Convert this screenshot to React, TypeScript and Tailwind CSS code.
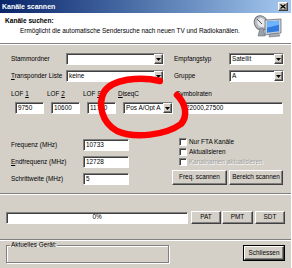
import React from "react";

const inset =
  "bg-white border border-t-[#808080] border-l-[#808080] border-b-white border-r-white shadow-[inset_1px_1px_0_#404040]";
const raised =
  "bg-[#d4d0c8] border border-t-white border-l-white border-b-[#404040] border-r-[#404040] shadow-[inset_-1px_-1px_0_#808080]";

const Arrow = () => (
  <span className={`${raised} flex h-full w-[9px] shrink-0 items-center justify-center`}>
    <svg width="5" height="3" viewBox="0 0 5 3">
      <path d="M0 0h5L2.5 3z" fill="#000" />
    </svg>
  </span>
);

const Combo = ({ value, className }: { value: string; className: string }) => (
  <div className={`${inset} flex h-[12px] items-center ${className}`}>
    <span className="flex-1 overflow-hidden pl-[2px] leading-none">{value}</span>
    <Arrow />
  </div>
);

const Field = ({ value, className }: { value: string; className: string }) => (
  <div className={`${inset} flex h-[12px] items-center overflow-hidden pl-[2px] leading-none ${className}`}>
    {value}
  </div>
);

const Button = ({ label, className }: { label: string; className: string }) => (
  <div className={`${raised} flex items-center justify-center leading-none ${className}`}>{label}</div>
);

const Check = ({ label, disabled }: { label: string; disabled?: boolean }) => (
  <div className="flex h-[8px] items-center gap-[2px]">
    <span className={`${inset} h-[8px] w-[8px] shrink-0 ${disabled ? "bg-[#d4d0c8]" : ""}`} />
    <span className={`leading-none ${disabled ? "text-[#a0a0a0] [text-shadow:1px_1px_0_#fff]" : ""}`}>{label}</span>
  </div>
);

const Separator = () => <div className="h-[2px] border-t border-t-[#808080] border-b border-b-white" />;

const ScanIcon = () => (
  <svg width="30" height="23" viewBox="0 0 30 23">
    <ellipse cx="8" cy="8" rx="6.5" ry="7.5" transform="rotate(-30 8 8)" fill="#b9bcc2" stroke="#6b7078" />
    <ellipse cx="8.5" cy="8" rx="4" ry="5" transform="rotate(-30 8 8)" fill="#e6e8ec" />
    <path d="M4 4l5 5" stroke="#555" strokeWidth="1" />
    <path d="M7 13l-2 8h7l-2-8z" fill="#9aa0a8" stroke="#6b7078" strokeWidth="0.6" />
    <path d="M12 5l16-1v14l-16 2z" fill="#c9ced6" stroke="#6b7078" strokeWidth="0.8" />
    <path d="M14 6.5l12-0.8v10.5l-12 1.5z" fill="#2f7be0" />
    <path d="M14 6.5l12-0.8v4l-12 3z" fill="#6fb4ff" />
    <path d="M17 19l8-1 2 3-11 1z" fill="#a8adb5" stroke="#6b7078" strokeWidth="0.6" />
  </svg>
);

export default function App() {
  return (
    <div className="relative h-[268px] w-[292px] overflow-hidden whitespace-nowrap border-r border-r-white bg-[#d4d0c8] font-['Liberation_Sans',Arial,sans-serif] text-[6.4px] text-black">
      {/* title bar */}
      <div className="flex h-[13px] items-center justify-between bg-gradient-to-r from-[#0a246a] to-[#a6caf0] pl-[2px] pr-[3px]">
        <span className="text-[7px] font-bold leading-none text-white">Kanäle scannen</span>
        <span className={`${raised} flex h-[9px] w-[10px] items-center justify-center`}>
          <svg width="6" height="5" viewBox="0 0 6 5">
            <path d="M0.5 0.5l5 4M5.5 0.5l-5 4" stroke="#000" strokeWidth="1.3" />
          </svg>
        </span>
      </div>

      {/* header */}
      <div className="flex h-[30px] justify-between bg-white">
        <div className="pl-[5px] pt-[5px] leading-none">
          <div className="text-[6.6px] font-bold">Kanäle suchen:</div>
          <div className="mt-[3px] pl-[15px]">Ermöglicht die automatische Sendersuche nach neuen TV und Radiokanälen.</div>
        </div>
        <div className="pr-[8px] pt-[2px]">
          <ScanIcon />
        </div>
      </div>
      <Separator />

      {/* rows 1-2 */}
      <div className="mt-[8px] flex flex-col gap-[5px] pl-[11px]">
        <div className="flex h-[12px] items-center">
          <span className="w-[55px]">Stammordner</span>
          <Combo value="" className="w-[98px]" />
          <span className="ml-[10px] w-[55px]">Empfangstyp</span>
          <Combo value="Satellit" className="w-[55px]" />
        </div>
        <div className="flex h-[12px] items-center">
          <span className="w-[55px]">
            <span className="underline">T</span>ransponder Liste
          </span>
          <Combo value="keine" className="w-[98px]" />
          <span className="ml-[10px] w-[55px]">Gruppe</span>
          <Combo value="A" className="w-[55px]" />
        </div>
      </div>

      {/* LOF row */}
      <div className="mt-[9px] flex pl-[11px]">
        <div className="w-[36px]">
          <div className="h-[8px] leading-none">LOF <span className="underline">1</span></div>
          <Field value="9750" className="ml-[4px] mt-[3px] w-[29px]" />
        </div>
        <div className="w-[36px]">
          <div className="h-[8px] leading-none">LOF <span className="underline">2</span></div>
          <Field value="10600" className="ml-[4px] mt-[3px] w-[29px]" />
        </div>
        <div className="w-[35px]">
          <div className="h-[8px] leading-none">LOF <span className="underline">S</span></div>
          <Field value="11700" className="ml-[4px] mt-[3px] w-[29px]" />
        </div>
        <div className="w-[58px]">
          <div className="h-[8px] leading-none">
            <span className="underline">D</span>iseqC
          </div>
          <Combo value="Pos A/Opt A" className="ml-[5px] mt-[3px] w-[50px]" />
        </div>
        <div>
          <div className="h-[8px] leading-none">Symbolraten</div>
          <Field value="22000,27500" className="ml-[7px] mt-[3px] w-[100px]" />
        </div>
      </div>

      {/* frequency + options */}
      <div className="mt-[24px] flex items-start">
        <div className="mt-[1px] flex w-[172px] flex-col gap-[5px] pl-[11px]">
          <div className="flex h-[12px] items-center">
            <span className="w-[72px]">Frequenz (MHz)</span>
            <Field value="10733" className="w-[46px]" />
          </div>
          <div className="flex h-[12px] items-center">
            <span className="w-[72px]">
              <span className="underline">E</span>ndfrequenz (MHz)
            </span>
            <Field value="12728" className="w-[46px]" />
          </div>
          <div className="flex h-[12px] items-center">
            <span className="w-[72px]">Schrittweite (MHz)</span>
            <Field value="5" className="w-[46px]" />
          </div>
        </div>
        <div className="flex flex-col">
          <div className="flex flex-col gap-[2px] pl-[7px]">
            <Check label="Nur FTA Kanäle" />
            <Check label="Aktualisieren" />
            <Check label="Kanalnamen aktualisieren" disabled />
          </div>
          <div className="mt-[4px] flex gap-[2px]">
            <Button label="Freq. scannen" className="h-[15px] w-[55px]" />
            <Button label="Bereich scannen" className="h-[15px] w-[54px]" />
          </div>
        </div>
      </div>

      <div className="mt-[8px]">
        <Separator />
      </div>

      {/* progress */}
      <div className="mt-[16px] flex items-center pl-[6px]">
        <div className={`${inset} flex h-[12px] w-[182px] items-center justify-center bg-[#d4d0c8] leading-none`}>0%</div>
        <Button label="PAT" className="ml-[3px] h-[13px] w-[30px]" />
        <Button label="PMT" className="ml-[1px] h-[13px] w-[31px]" />
        <Button label="SDT" className="ml-[2px] h-[13px] w-[30px]" />
      </div>

      <div className="mt-[15px]">
        <Separator />
      </div>

      {/* bottom */}
      <div className="mt-[1px] flex items-start pl-[6px]">
        <fieldset className="h-[21px] w-[163px] border border-[#808080] px-[3px] shadow-[inset_1px_1px_0_#fff,1px_1px_0_#fff]">
          <legend className="px-[1px] leading-none">Aktuelles Gerät:</legend>
        </fieldset>
        <div className="ml-[74px] mt-[3px] border border-black">
          <Button label="Schliessen" className="h-[14px] w-[40px]" />
        </div>
      </div>

      {/* annotation */}
      <svg className="pointer-events-none absolute left-0 top-0" width="292" height="268" viewBox="0 0 292 268">
        <path
          d="M160 81 C140 76, 112 79, 104 92 C98 104, 101 122, 117 131 C135 139, 166 135, 181 124 C188 116, 186 104, 177 95"
          fill="none"
          stroke="#ff0000"
          strokeWidth="6.5"
          strokeLinecap="round"
        />
      </svg>
    </div>
  );
}
